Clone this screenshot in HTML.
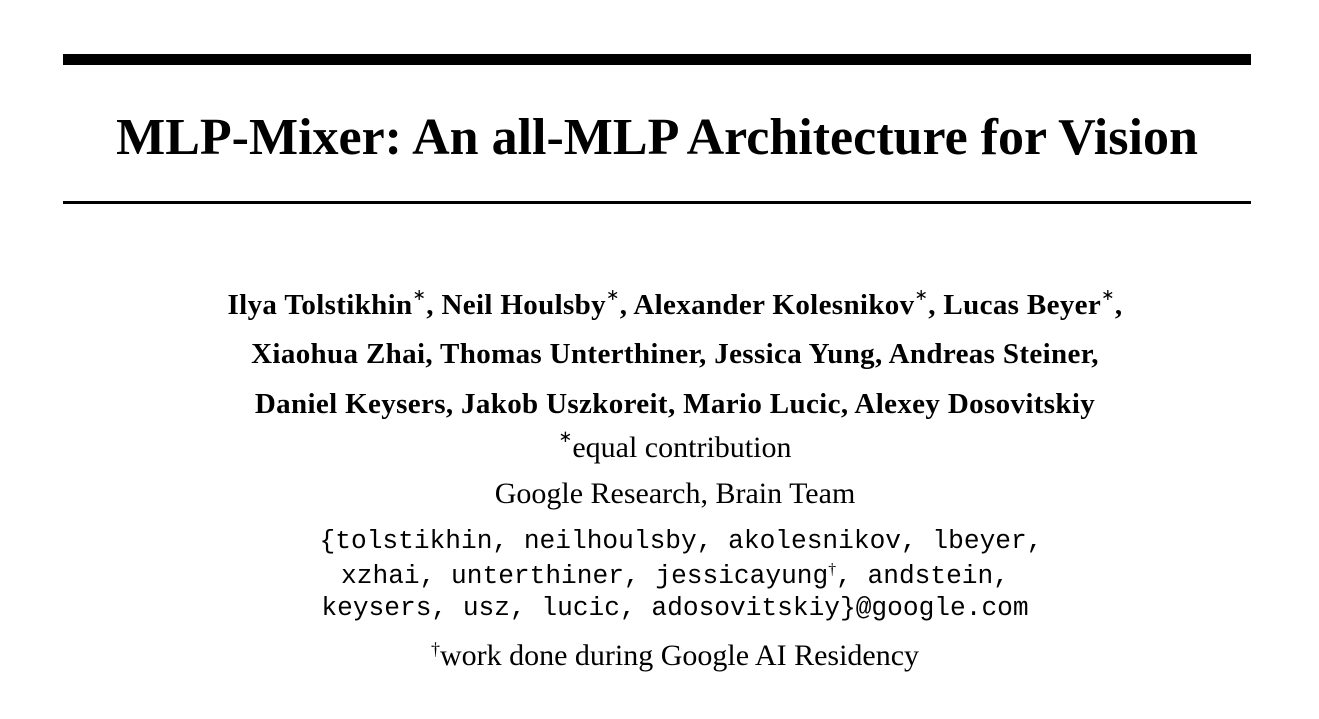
<!DOCTYPE html>
<html><head><meta charset="utf-8"><style>
body{margin:0;width:1319px;height:719px;background:#fff;position:relative;overflow:hidden;font-family:"Liberation Serif",serif;color:#000}
.l{position:absolute;left:0;width:1350px;text-align:center;line-height:1;white-space:nowrap}
.b{font-weight:bold}
.a{font-size:29px;letter-spacing:0.35px}
.r{font-size:30px}
.m{font-family:"Liberation Mono",monospace;font-size:26.2px}
sup{font-size:60%;vertical-align:0;position:relative;top:-0.55em}
.s{font-weight:normal;font-size:55%;top:-0.9em}
</style></head><body>
<div style="position:absolute;left:63px;top:54px;width:1188px;height:11px;background:#000"></div>
<div class="l b" style="font-size:52px;top:112px;width:1314px">MLP-Mixer: An all-MLP Architecture for Vision</div>
<div style="position:absolute;left:63px;top:201px;width:1188px;height:3px;background:#000"></div>
<div class="l b a" style="top:291px">Ilya Tolstikhin<sup class="s">∗</sup>, Neil Houlsby<sup class="s">∗</sup>, Alexander Kolesnikov<sup class="s">∗</sup>, Lucas Beyer<sup class="s">∗</sup>,</div>
<div class="l b a" style="top:340px">Xiaohua Zhai, Thomas Unterthiner, Jessica Yung, Andreas Steiner,</div>
<div class="l b a" style="top:390px">Daniel Keysers, Jakob Uszkoreit, Mario Lucic, Alexey Dosovitskiy</div>
<div class="l r" style="top:433px"><sup class="s">∗</sup>equal contribution</div>
<div class="l r" style="top:479px">Google Research, Brain Team</div>
<div class="l m" style="top:528px;left:6px">{tolstikhin, neilhoulsby, akolesnikov, lbeyer,</div>
<div class="l m" style="top:563px">xzhai, unterthiner, jessicayung<sup style="font-family:'Liberation Serif',serif">†</sup>, andstein,</div>
<div class="l m" style="top:595px">keysers, usz, lucic, adosovitskiy}@google.com</div>
<div class="l r" style="top:641px"><sup>†</sup>work done during Google AI Residency</div>
</body></html>
